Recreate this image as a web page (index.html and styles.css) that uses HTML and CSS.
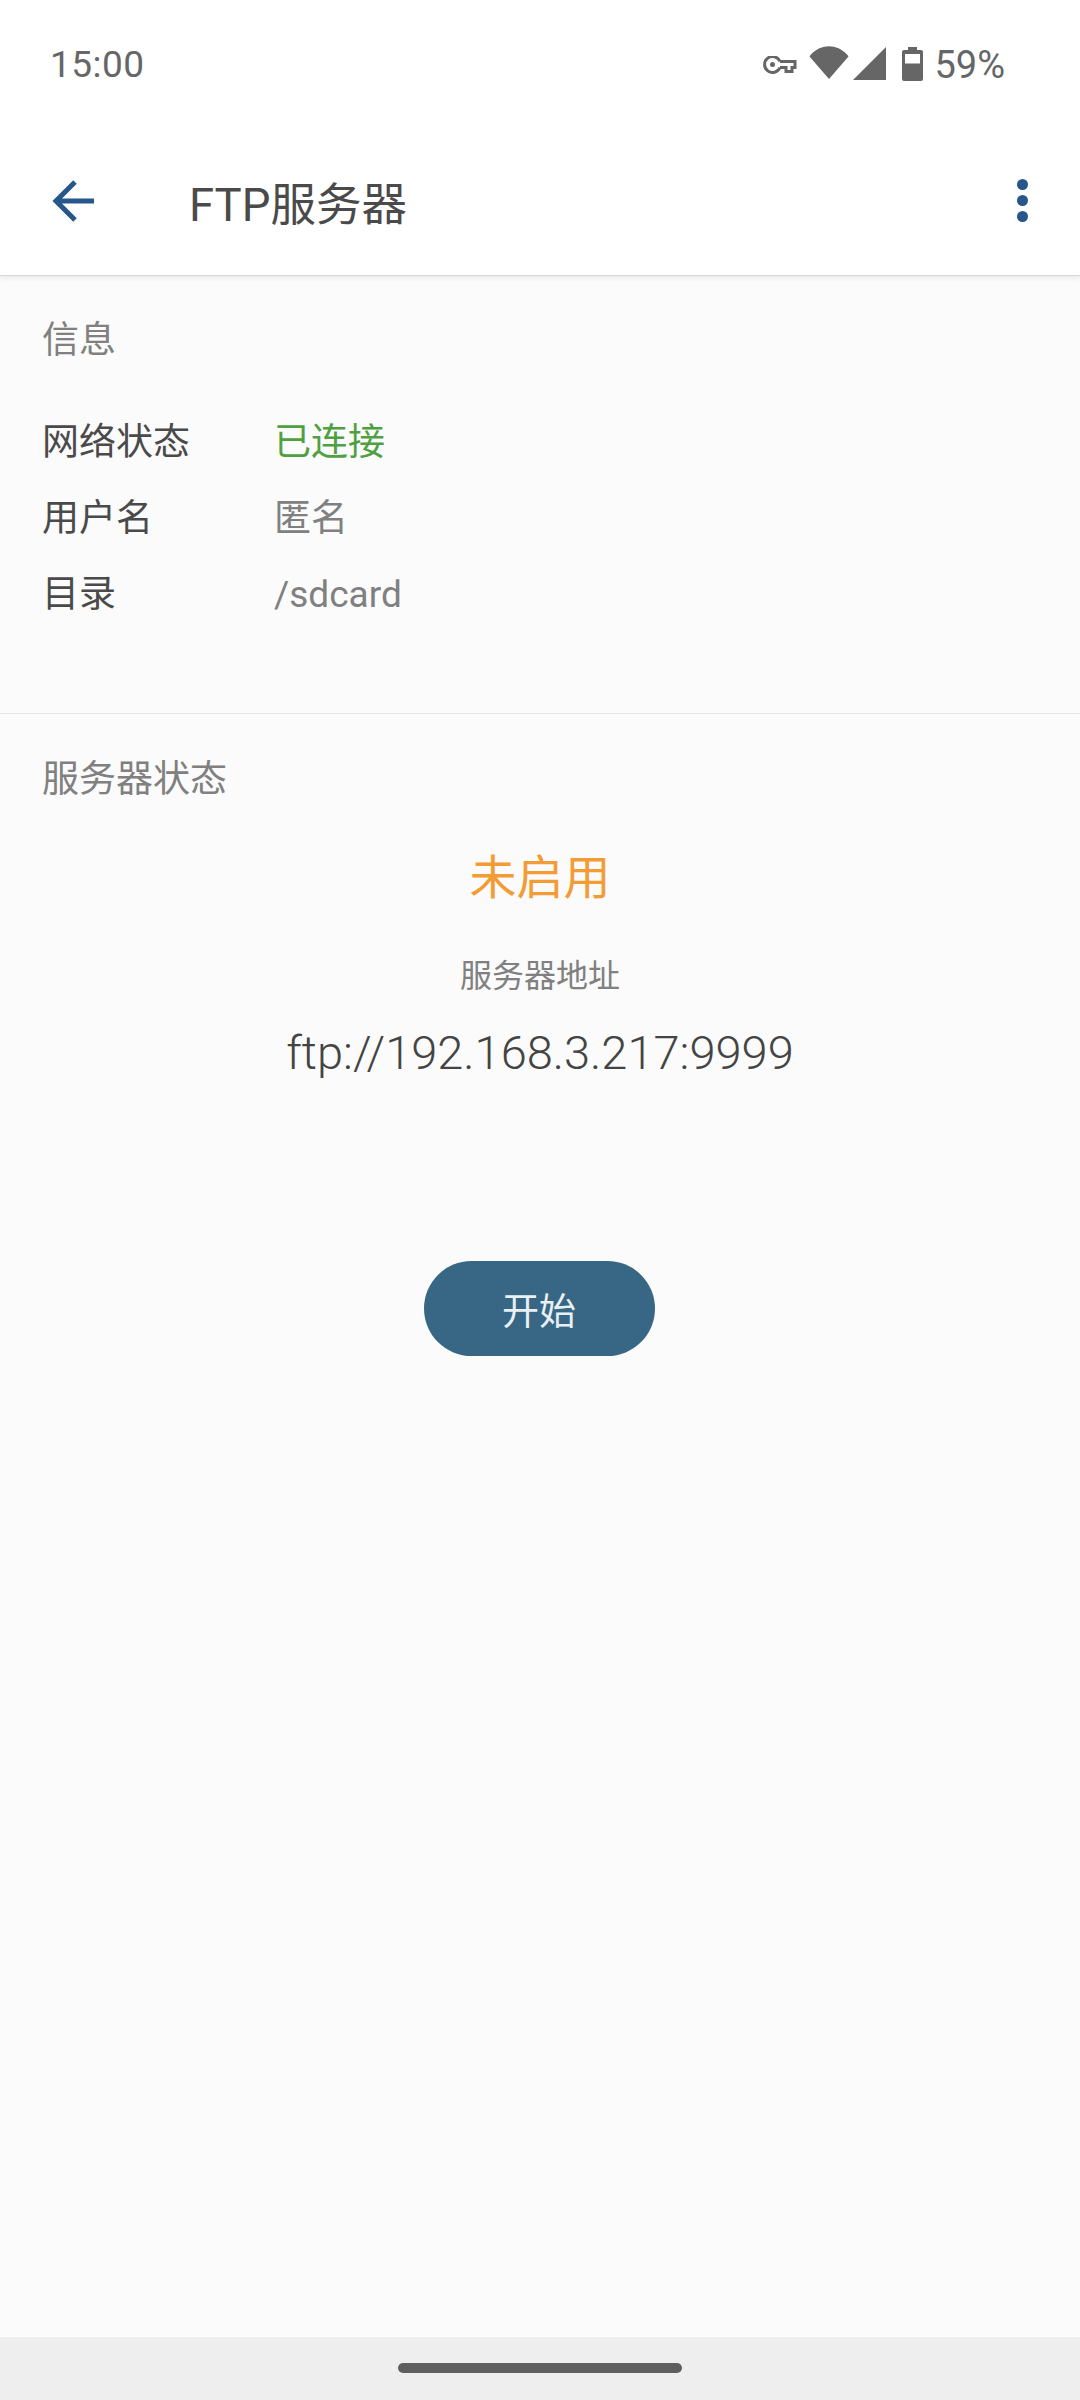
FILE: index.html
```html
<!DOCTYPE html>
<html lang="zh-CN">
<head>
    <meta charset="UTF-8">
    <meta name="viewport" content="width=device-width, initial-scale=1.0">
    <title>FTP服务器</title>
    <link rel="stylesheet" href="styles.css">
</head>
<body>
<div class="screen">
    <header class="top">
        <div class="status-bar">
            <span class="clock">15:00</span>
            <div class="status-icons">
                <svg class="ic-key" width="34" height="20" viewBox="0 0 34 20">
                    <path fill="none" stroke="#666" stroke-width="3" d="M17 5.500h15v6h-3v4h-6v-4h-6M17 11.500a8 8 0 1 1 0-6"/>
                    <circle cx="9.500" cy="8.500" r="2.500" fill="#666"/>
                </svg>
                <svg class="ic-wifi" width="40" height="33" viewBox="0 0 40 33">
                    <path fill="#666" d="M20 33 0.500 10.500Q1 9.500 2 8.500C12 -2.500 28 -2.500 38 8.500Q39 9.500 39.500 10.500Z"/>
                </svg>
                <svg class="ic-signal" width="33" height="33" viewBox="0 0 33 33">
                    <path fill="#666" d="M33 0V33H0Z"/>
                </svg>
                <svg class="ic-battery" width="21" height="34" viewBox="0 0 21 34">
                    <path fill="#666" fill-rule="evenodd" d="M6 0h9v3h4q2 0 2 2v27q0 2-2 2H2q-2 0-2-2V5q0-2 2-2h4ZM3 7v9.500h15V7Z"/>
                </svg>
                <span class="percent">59%</span>
            </div>
        </div>
        <div class="app-bar">
            <svg class="back" width="42" height="42" viewBox="0 0 42 42">
                <path fill="none" stroke="#27568a" stroke-width="5" d="M42 21H5M23 2 4 21l19 19"/>
            </svg>
            <h1 class="title">FTP服务器</h1>
            <div class="more"><i></i><i></i><i></i></div>
        </div>
    </header>

    <main class="content">
        <section class="info">
            <h2 class="section-label">信息</h2>
            <div class="info-rows">
                <div class="row"><span class="key">网络状态</span><span class="val ok">已连接</span></div>
                <div class="row"><span class="key">用户名</span><span class="val">匿名</span></div>
                <div class="row"><span class="key">目录</span><span class="val">/sdcard</span></div>
            </div>
        </section>

        <section class="server">
            <h2 class="section-label">服务器状态</h2>
            <div class="state">未启用</div>
            <div class="addr-label">服务器地址</div>
            <div class="addr">ftp://192.168.3.217:9999</div>
            <button class="start">开始</button>
        </section>
    </main>

    <footer class="nav-bar"><div class="handle"></div></footer>
</div>
</body>
</html>
```
FILE: styles.css
```css
* {
    box-sizing: border-box;
}

html, body {
    margin: 0;
    padding: 0;
}

body {
    width: 1080px;
    height: 2400px;
    overflow: hidden;
    font-family: Roboto, "Noto Sans CJK SC", sans-serif;
    background-color: #fbfbfb;
}

.screen {
    height: 2400px;
    display: flex;
    flex-direction: column;
}

.top {
    height: 276px;
    background-color: #fff;
    border-bottom: 1px solid #d8d8d8;
    box-shadow: 0 2px 5px rgba(0, 0, 0, 0.08);
    position: relative;
}

.status-bar {
    height: 128px;
    padding: 43px 75px 0 50px;
    display: flex;
    justify-content: space-between;
    align-items: flex-start;
    color: #666;
}

.clock {
    font-size: 37px;
    line-height: 42px;
    margin-top: 1px;
    letter-spacing: 0.5px;
}

.status-icons {
    display: flex;
    align-items: flex-start;
}

.ic-key {
    margin-top: 13px;
    margin-right: 12px;
}

.ic-wifi {
    margin-top: 3px;
    margin-right: 4px;
}

.ic-signal {
    margin-top: 4px;
    margin-right: 16px;
}

.ic-battery {
    margin-top: 4px;
    margin-right: 11px;
}

.percent {
    font-size: 38px;
    line-height: 42px;
    margin-top: 1px;
}

.app-bar {
    height: 147px;
    display: flex;
    align-items: center;
    padding-left: 52px;
    padding-right: 52px;
}

.back {
    margin-top: -1px;
}

.title {
    margin: 8px 0 0 95px;
    font-size: 45.500px;
    font-weight: 400;
    color: #4a4a4a;
    line-height: 60px;
    flex: 1;
}

.more {
    display: flex;
    flex-direction: column;
    gap: 5px;
    margin-top: -3px;
}

.more i {
    display: block;
    width: 11px;
    height: 11px;
    border-radius: 50%;
    background-color: #27568a;
}

.content {
    flex: 1;
}

.section-label {
    margin: 0;
    font-size: 37px;
    font-weight: 400;
    line-height: 48px;
    color: #808080;
}

.info {
    height: 438px;
    padding: 41px 42px 0;
    border-bottom: 1px solid #e6e6e6;
}

.info-rows {
    margin-top: 40px;
}

.row {
    display: flex;
    align-items: baseline;
    height: 76px;
    font-size: 37px;
    line-height: 76px;
}

.key {
    width: 232px;
    color: #4a4a4a;
}

.val {
    color: #808080;
}

.val.ok {
    color: #4fa041;
}

.server {
    display: flex;
    flex-direction: column;
    align-items: center;
    padding-top: 42px;
}

.server .section-label {
    align-self: flex-start;
    margin-left: 42px;
}

.state {
    margin-top: 44px;
    font-size: 47px;
    line-height: 60px;
    color: #f39c35;
}

.addr-label {
    margin-top: 48px;
    font-size: 32px;
    line-height: 40px;
    color: #808080;
}

.addr {
    margin-top: 27px;
    font-size: 47px;
    font-weight: 300;
    line-height: 60px;
    color: #444;
}

.start {
    margin-top: 178px;
    margin-right: 2px;
    width: 231px;
    height: 95px;
    border: none;
    border-radius: 48px;
    background-color: #386786;
    color: #e8f0f4;
    font-family: inherit;
    font-size: 37px;
}

.nav-bar {
    height: 63px;
    background-color: #eee;
    display: flex;
    justify-content: center;
    padding-top: 26px;
}

.handle {
    width: 284px;
    height: 10px;
    border-radius: 5px;
    background-color: #5f5f5f;
}
```
